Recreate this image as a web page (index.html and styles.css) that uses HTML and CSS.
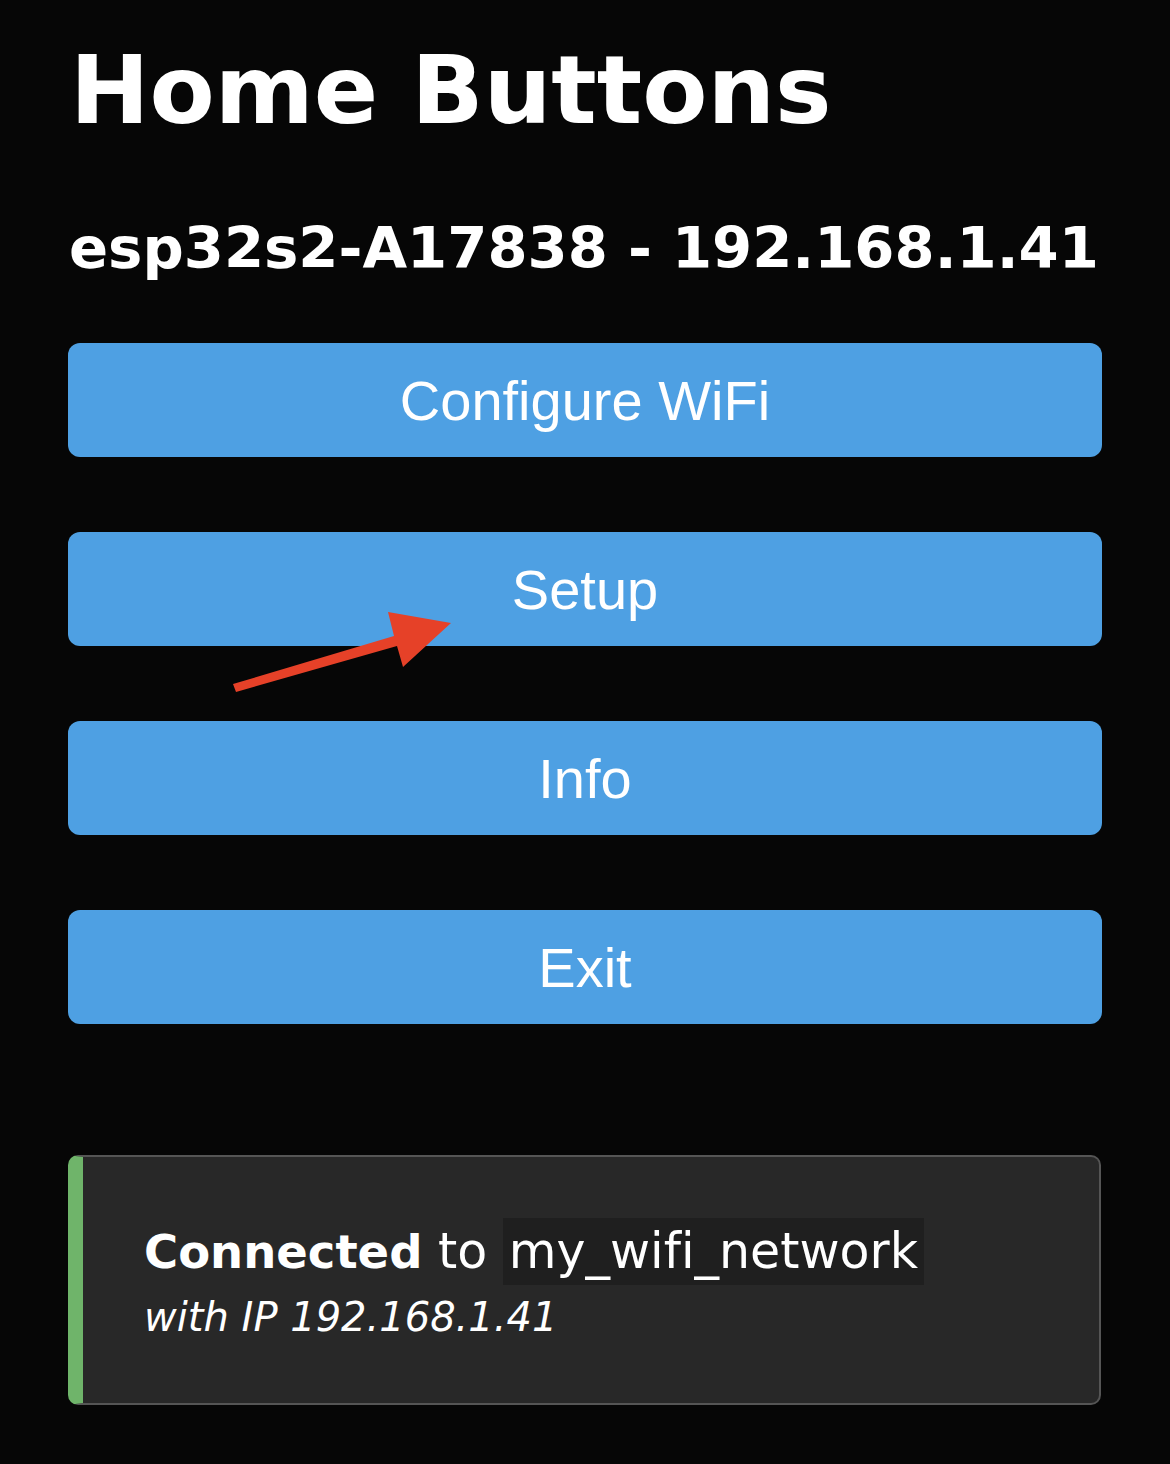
FILE: index.html
```html
<!DOCTYPE html>
<html>
<head>
<meta charset="utf-8">
<link rel="stylesheet" href="styles.css">
</head>
<body>
<div class="page">
  <h1 class="title">Home Buttons</h1>
  <h3 class="subtitle">esp32s2-A17838 - 192.168.1.41</h3>
  <div class="menu">
    <button class="btn">Configure WiFi</button>
    <button class="btn">Setup</button>
    <button class="btn">Info</button>
    <button class="btn">Exit</button>
  </div>
  <div class="status">
    <p class="status-line"><strong>Connected</strong> to <code class="ssid">my_wifi_network</code></p>
    <p class="status-ip"><em>with IP 192.168.1.41</em></p>
  </div>
</div>
<svg class="arrow" width="1170" height="1464" viewBox="0 0 1170 1464">
  <polygon points="233,684 394,636 388,612 451,623 403,667 397,646 236,692" fill="#e64128"/>
</svg>
</body>
</html>
```

FILE: styles.css
```css
html, body {
  margin: 0;
  padding: 0;
  background: #060606;
}
body {
  width: 1170px;
  height: 1464px;
  position: relative;
  overflow: hidden;
  font-family: "DejaVu Sans", Verdana, sans-serif;
  font-variant-ligatures: none;
  color: #ffffff;
}
.page {
  padding: 42px 68px 0 68px;
  display: flex;
  flex-direction: column;
}
.title {
  margin: 0;
  font-size: 95px;
  line-height: 96px;
  font-weight: bold;
  padding-left: 2px;
}
.subtitle {
  margin: 82px 0 0 0;
  font-size: 57.7px;
  line-height: 57px;
  font-weight: bold;
  padding-left: 1px;
}
.menu {
  margin-top: 66px;
  display: flex;
  flex-direction: column;
  gap: 75px;
}
.btn {
  display: flex;
  align-items: center;
  justify-content: center;
  width: 1034px;
  height: 114px;
  margin: 0;
  padding: 0;
  border: none;
  border-radius: 12px;
  background: #4ea0e3;
  color: #ffffff;
  font-family: "Liberation Sans", Arial, sans-serif;
  font-size: 56px;
}
.status {
  margin-top: 131px;
  width: 1033px;
  box-sizing: border-box;
  height: 250px;
  background: #282828;
  border: 2px solid #555555;
  border-left: 15px solid #6fb46a;
  border-radius: 10px;
  padding: 62px 0 0 61px;
}
.status-line {
  margin: 0;
  font-size: 49px;
  line-height: 66px;
  white-space: nowrap;
}
.status-line strong {
  font-weight: bold;
  font-size: 46.5px;
}
.ssid {
  font-family: "DejaVu Sans", Verdana, sans-serif;
  font-size: 49px;
  background: #1f1f1f;
  padding: 5px 6px;
}
.status-ip {
  margin: 7px 0 0 0;
  font-size: 40px;
  line-height: 50px;
}
.arrow {
  position: absolute;
  left: 0;
  top: 0;
  pointer-events: none;
}
```
